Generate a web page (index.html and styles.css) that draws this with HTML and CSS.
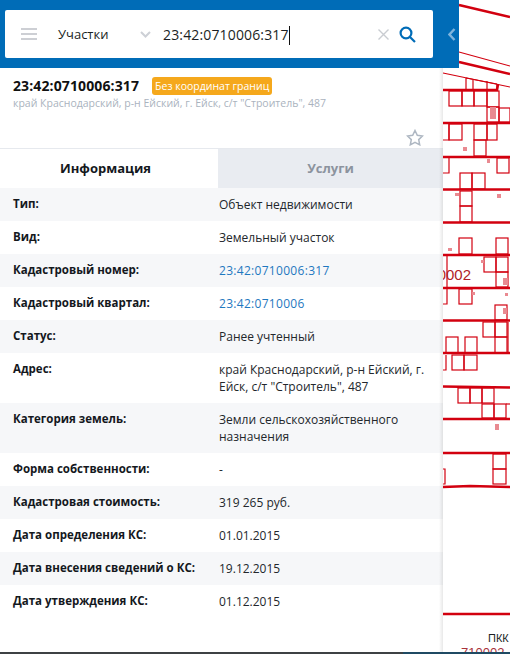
FILE: index.html
```html
<!DOCTYPE html>
<html lang="ru">
<head>
    <meta charset="UTF-8">
    <title>Участки</title>
    <link rel="stylesheet" href="styles.css">
</head>
<body>
    <div class="page">
        <!-- map tiles under the panel -->
        <svg class="map" width="510" height="654" viewBox="0 0 510 654">
            <g class="thick">
                <path d="M459 5L510 17M459 62L510 74M443 90H497L498 84M443 123H510M443 157H510M443 189.5H510M443 222.5H510M443 255H510M443 288H510M443 320.5H510M443 353H510M443 386.5L510 387.5M443 419H510M443 453H510M443 487L470 486L510 487M443 614H510"/>
            </g>
            <g class="thin">
                <path d="M459 52L510 66M443 73L510 87"/>
                <path d="M466 78V90M473 79V90M487 81V90M497 84V90M466 78L497 84"/>
                <rect x="449" y="91" width="13" height="15"/>
                <rect x="462" y="91" width="12" height="15"/>
                <rect x="474" y="91" width="13" height="15"/>
                <rect x="487" y="91" width="12" height="16"/>
                <rect x="487" y="107" width="12" height="15"/>
                <rect x="499" y="108" width="11" height="14"/>
                <path d="M443 140H449V124"/>
                <rect x="449" y="124" width="13" height="16"/>
                <rect x="474" y="124" width="13" height="16"/>
                <rect x="487" y="124" width="10" height="16"/>
                <rect x="474" y="140" width="12" height="16"/>
                <path d="M443 173H449V158"/>
                <rect x="497" y="158" width="12" height="15"/>
                <rect x="460" y="173" width="12" height="16"/>
                <rect x="472" y="173" width="13" height="16"/>
                <rect x="460" y="191" width="12" height="15"/>
                <rect x="460" y="206" width="12" height="16"/>
                <rect x="459" y="238" width="13" height="16"/>
                <rect x="496" y="238" width="12" height="16"/>
                <path d="M447 255V288"/>
                <rect x="484" y="257" width="12" height="15"/>
                <rect x="496" y="257" width="12" height="15"/>
                <rect x="496" y="272" width="12" height="15"/>
                <path d="M443 304H447V289"/>
                <rect x="459" y="289" width="13" height="15"/>
                <rect x="495" y="305" width="12" height="15"/>
                <rect x="483" y="322" width="12" height="15"/>
                <rect x="495" y="322" width="12" height="15"/>
                <rect x="495" y="337" width="12" height="16"/>
                <path d="M508 322V353"/>
                <rect x="446" y="337" width="12" height="16"/>
                <rect x="465" y="337" width="12" height="16"/>
                <path d="M443 370H446V355"/>
                <rect x="452" y="355" width="12" height="15"/>
                <rect x="464" y="355" width="13" height="15"/>
                <rect x="458" y="388" width="12" height="15"/>
                <rect x="470" y="388" width="12" height="15"/>
                <rect x="482" y="388" width="12" height="15"/>
                <rect x="482" y="404" width="12" height="14"/>
                <rect x="494" y="404" width="12" height="14"/>
                <path d="M506 404H510"/>
                <rect x="493" y="454" width="13" height="15"/>
                <rect x="493" y="469" width="13" height="15"/>
                <path d="M443 469H445V484H443"/>
            </g>
            <g class="spots">
                <rect x="490" y="107" width="6" height="12"/>
                <rect x="463" y="147" width="4" height="4"/>
                <rect x="487" y="159" width="3" height="4"/>
                <rect x="455" y="193" width="4" height="3"/>
                <rect x="497" y="194" width="4" height="4"/>
                <rect x="448" y="248" width="4" height="3"/>
                <rect x="481" y="260" width="3" height="3"/>
                <rect x="503" y="278" width="5" height="7"/>
                <rect x="472" y="292" width="3" height="3"/>
                <rect x="505" y="293" width="3" height="3"/>
                <rect x="503" y="308" width="4" height="6"/>
                <rect x="495" y="424" width="4" height="6"/>
            </g>
        </svg>
        <p class="map-num">710002</p>
        <p class="map-pkk">ПКК</p>
        <p class="map-code">710002</p>

        <div class="panel">
            <header class="header">
                <div class="search">
                    <svg class="menu-icon" width="16" height="12" viewBox="0 0 16 12">
                        <path d="M0 1H16M0 6H16M0 11H16"/>
                    </svg>
                    <span class="search-type">Участки</span>
                    <svg class="select-arrow" width="11" height="7" viewBox="0 0 11 7">
                        <path d="M1 1L5.5 5.5L10 1"/>
                    </svg>
                    <span class="search-text">23:42:0710006:317</span>
                    <svg class="clear-icon" width="11" height="11" viewBox="0 0 11 11">
                        <path d="M0.5 0.5L10.5 10.5M10.5 0.5L0.5 10.5"/>
                    </svg>
                    <svg class="search-icon" width="17" height="17" viewBox="0 0 17 17">
                        <circle cx="7" cy="7" r="5.4"/>
                        <path d="M11 11L16 16"/>
                    </svg>
                </div>
                <svg class="collapse-icon" width="8" height="13" viewBox="0 0 8 13">
                    <path d="M6.5 1L1.5 6.5L6.5 12"/>
                </svg>
            </header>

            <div class="summary">
                <div class="summary-top">
                    <span class="summary-num">23:42:0710006:317</span>
                    <span class="badge">Без координат границ</span>
                </div>
                <div class="summary-addr">край Краснодарский, р-н Ейский, г. Ейск, с/т "Строитель", 487</div>
                <svg class="star-icon" width="18" height="17" viewBox="0 0 18 17">
                    <path d="M9 1.5L11.3 6.3L16.5 7L12.7 10.6L13.7 15.8L9 13.3L4.3 15.8L5.3 10.6L1.5 7L6.7 6.3Z"/>
                </svg>
            </div>

            <div class="tabs">
                <div class="tab tab-active">Информация</div>
                <div class="tab">Услуги</div>
            </div>

            <div class="info">
                <div class="row"><div class="label">Тип:</div><div class="value">Объект недвижимости</div></div>
                <div class="row"><div class="label">Вид:</div><div class="value">Земельный участок</div></div>
                <div class="row"><div class="label">Кадастровый номер:</div><div class="value link">23:42:0710006:317</div></div>
                <div class="row"><div class="label">Кадастровый квартал:</div><div class="value link">23:42:0710006</div></div>
                <div class="row"><div class="label">Статус:</div><div class="value">Ранее учтенный</div></div>
                <div class="row"><div class="label">Адрес:</div><div class="value">край Краснодарский, р-н Ейский, г. Ейск, с/т "Строитель", 487</div></div>
                <div class="row"><div class="label">Категория земель:</div><div class="value">Земли сельскохозяйственного назначения</div></div>
                <div class="row"><div class="label">Форма собственности:</div><div class="value">-</div></div>
                <div class="row"><div class="label">Кадастровая стоимость:</div><div class="value">319 265 руб.</div></div>
                <div class="row"><div class="label">Дата определения КС:</div><div class="value">01.01.2015</div></div>
                <div class="row"><div class="label">Дата внесения сведений о КС:</div><div class="value">19.12.2015</div></div>
                <div class="row"><div class="label">Дата утверждения КС:</div><div class="value">01.12.2015</div></div>
            </div>
        </div>
        <div class="screen-edge"></div>
    </div>
</body>
</html>
```

FILE: styles.css
```css
html, body {
    margin: 0;
    padding: 0;
}
body {
    width: 510px;
    height: 654px;
    overflow: hidden;
    background-color: #fff;
    font-family: "Open Sans", "Noto Sans", sans-serif;
    font-size: 12px;
    color: #1b1f24;
}
.page {
    position: relative;
    width: 510px;
    height: 654px;
    overflow: hidden;
}

/* map */
.map {
    position: absolute;
    left: 0;
    top: 0;
}
.map path, .map .thin rect {
    fill: none;
    stroke: #d2000f;
}
.thick path {
    stroke-width: 2.6;
}
.map .thin path, .map .thin rect {
    stroke-width: 1.2;
}
.map .spots rect {
    fill: #e98a91;
}
.map-num, .map-pkk, .map-code {
    position: absolute;
    margin: 0;
    font-family: "Liberation Sans", sans-serif;
}
.map-num {
    left: 421px;
    top: 266px;
    font-size: 15px;
    line-height: 18px;
    color: #b01c28;
}
.map-pkk {
    left: 488px;
    top: 631px;
    font-size: 11px;
    line-height: 14px;
    color: #1b1f24;
}
.map-code {
    left: 461px;
    top: 645px;
    font-size: 13px;
    line-height: 16px;
    color: #a8323a;
}
/* strip of the window below, seen at the very bottom */
.screen-edge {
    position: absolute;
    left: 0;
    right: 0;
    bottom: 0;
    height: 2px;
    background: linear-gradient(to right, #3d4144 403px, #1f4a63 403px);
}

/* panel */
.panel {
    position: relative;
    width: 443px;
    height: 654px;
    background-color: #fff;
}
.panel::after {
    content: "";
    position: absolute;
    right: 0;
    top: 68px;
    bottom: 0;
    width: 4px;
    background: linear-gradient(to right, rgba(0, 0, 0, 0), rgba(0, 0, 0, 0.09));
}
.header {
    display: flex;
    align-items: center;
    width: 459px;
    height: 68px;
    padding: 10px 0 10px 5px;
    box-sizing: border-box;
    background-color: #006cb7;
}
.search {
    display: flex;
    align-items: center;
    width: 428px;
    height: 48px;
    background-color: #fff;
    border-radius: 2px;
    font-size: 13px;
    color: #1b1f24;
}
.menu-icon {
    margin-left: 16px;
    flex: none;
}
.menu-icon path {
    stroke: #cdcfd4;
    stroke-width: 2;
}
.search-type {
    margin-left: 21px;
    width: 82px;
}
.select-arrow {
    flex: none;
}
.select-arrow path, .clear-icon path, .collapse-icon path, .search-icon path, .search-icon circle {
    fill: none;
}
.select-arrow path {
    stroke: #cdd0d6;
    stroke-width: 2;
}
.search-text {
    margin-left: 12px;
    width: 215px;
    font-size: 14px;
    letter-spacing: 0.15px;
    line-height: 19px;
}
.search-text::after {
    content: "";
    display: inline-block;
    width: 1px;
    height: 19px;
    margin-bottom: -5px;
    background-color: #111;
}
.clear-icon {
    flex: none;
}
.clear-icon path {
    stroke: #c9ccd1;
    stroke-width: 1.4;
}
.search-icon {
    margin-left: 10px;
    flex: none;
}
.search-icon circle, .search-icon path {
    stroke: #006cb7;
    stroke-width: 2.2;
}
.collapse-icon {
    margin-left: 15px;
    flex: none;
}
.collapse-icon path {
    stroke: #7fb4dc;
    stroke-width: 2.4;
}

/* summary */
.summary {
    position: relative;
    height: 81px;
    box-sizing: border-box;
    padding: 9px 13px 0;
    border-bottom: 1px solid #e6e9ee;
}
.summary-top {
    display: flex;
    align-items: center;
    gap: 13px;
}
.summary-num {
    font-size: 14px;
    font-weight: 700;
    letter-spacing: 0.12px;
    line-height: 18px;
    color: #111;
}
.badge {
    padding: 0 3px;
    font-size: 10.5px;
    line-height: 18px;
    color: #fff;
    background-color: #f5a81c;
    border-radius: 3px;
}
.summary-addr {
    margin-top: 1px;
    font-size: 10.5px;
    line-height: 15px;
    color: #aab3be;
}
.star-icon {
    position: absolute;
    right: 19px;
    bottom: 2px;
}
.star-icon path {
    fill: none;
    stroke: #aeb7c2;
    stroke-width: 1.5;
}

/* tabs */
.tabs {
    display: flex;
    height: 39px;
}
.tab {
    flex: 1;
    font-size: 13px;
    font-weight: 700;
    line-height: 39px;
    text-align: center;
    color: #8c939e;
    background-color: #e9ecf1;
}
.tab-active {
    flex: none;
    width: 211px;
    padding-right: 7px;
    color: #14181d;
    background-color: #fff;
}

/* info rows */
.row {
    display: flex;
    padding: 8px 0;
}
.row:nth-child(odd) {
    background-color: #f6f7f9;
}
.label {
    width: 219px;
    box-sizing: border-box;
    padding-left: 13px;
    flex: none;
    font-size: 11.5px;
    font-weight: 700;
    line-height: 15px;
    color: #14181d;
}
.value {
    width: 220px;
    line-height: 17px;
    color: #23272c;
}
.link {
    letter-spacing: 0.3px;
    color: #1f78c0;
}
```
